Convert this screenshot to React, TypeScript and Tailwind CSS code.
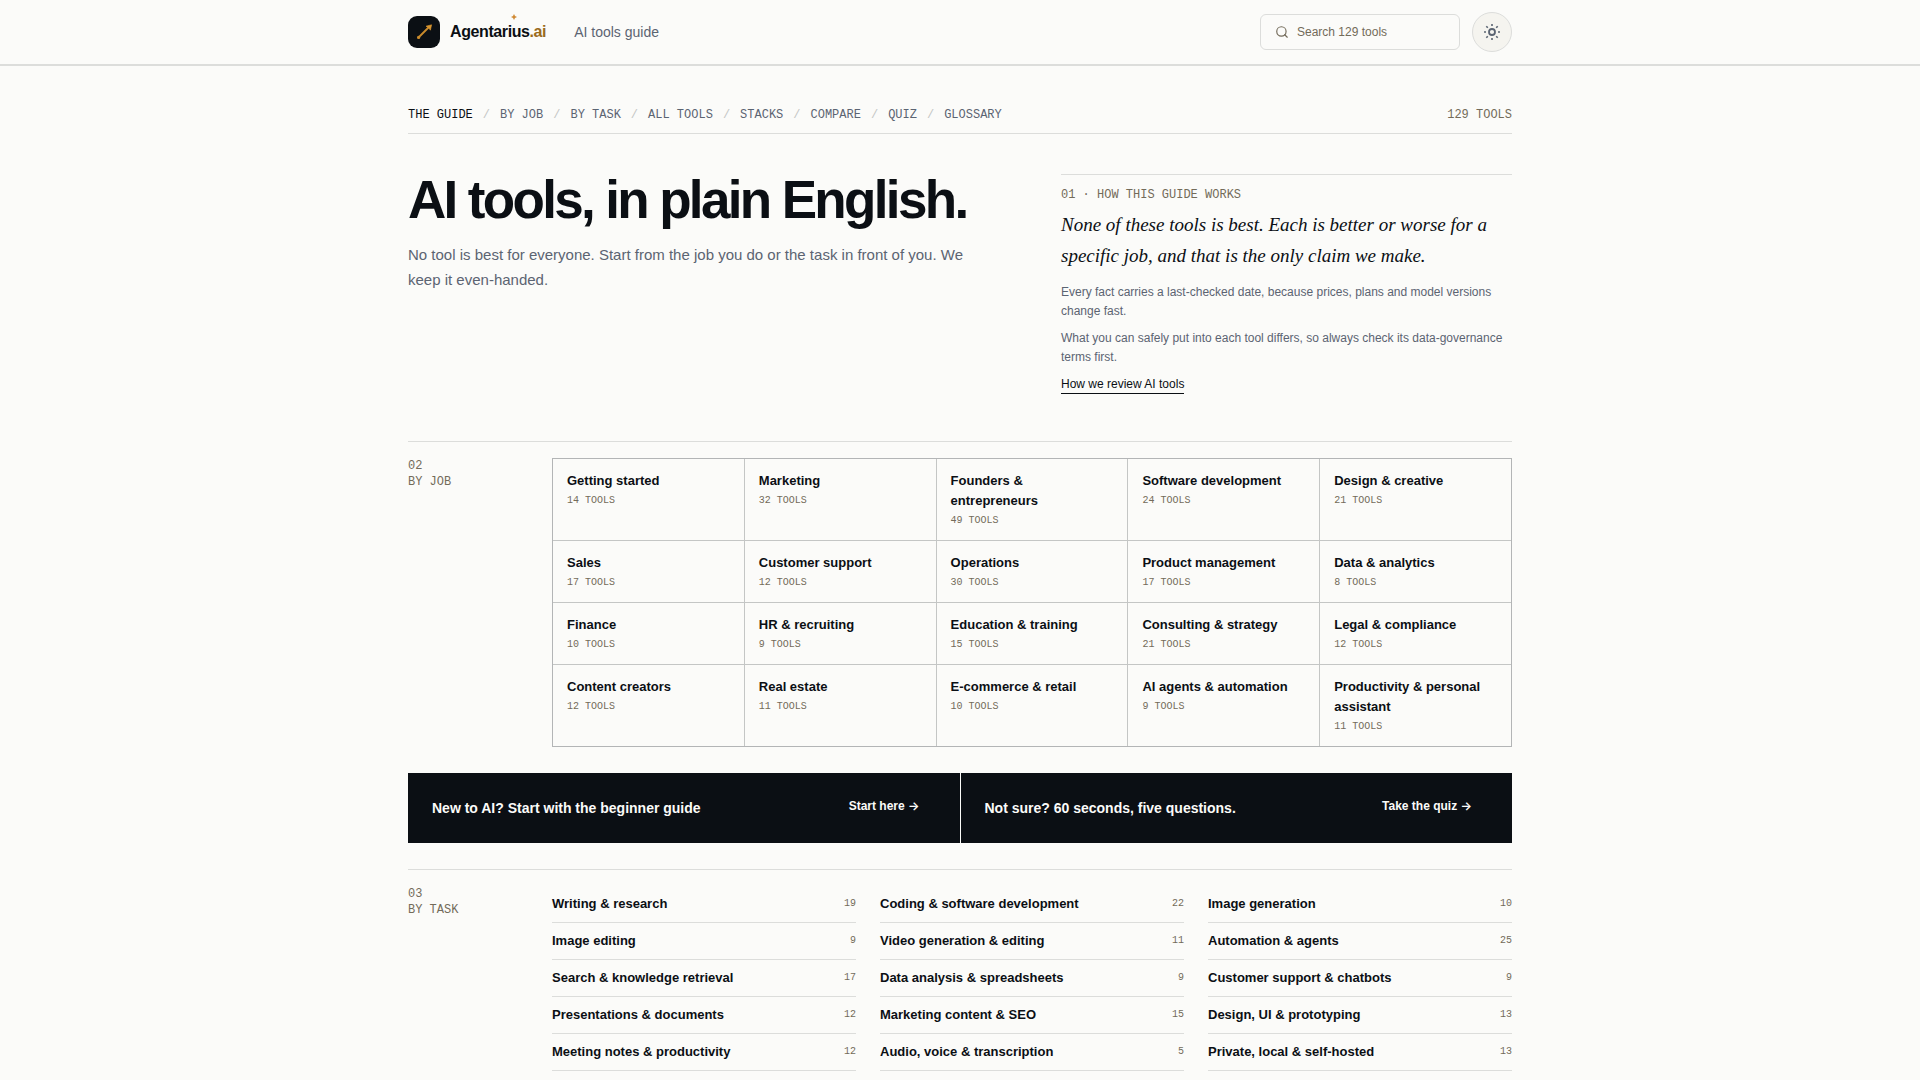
import React from "react";
import { Search } from "lucide-react";

const sections = ["The guide", "By job", "By task", "All tools", "Stacks", "Compare", "Quiz", "Glossary"];

const jobs: [string, number][] = [
  ["Getting started", 14],
  ["Marketing", 32],
  ["Founders & entrepreneurs", 49],
  ["Software development", 24],
  ["Design & creative", 21],
  ["Sales", 17],
  ["Customer support", 12],
  ["Operations", 30],
  ["Product management", 17],
  ["Data & analytics", 8],
  ["Finance", 10],
  ["HR & recruiting", 9],
  ["Education & training", 15],
  ["Consulting & strategy", 21],
  ["Legal & compliance", 12],
  ["Content creators", 12],
  ["Real estate", 11],
  ["E-commerce & retail", 10],
  ["AI agents & automation", 9],
  ["Productivity & personal assistant", 11],
];

const tasks: [string, number][] = [
  ["Writing & research", 19],
  ["Coding & software development", 22],
  ["Image generation", 10],
  ["Image editing", 9],
  ["Video generation & editing", 11],
  ["Automation & agents", 25],
  ["Search & knowledge retrieval", 17],
  ["Data analysis & spreadsheets", 9],
  ["Customer support & chatbots", 9],
  ["Presentations & documents", 12],
  ["Marketing content & SEO", 15],
  ["Design, UI & prototyping", 13],
  ["Meeting notes & productivity", 12],
  ["Audio, voice & transcription", 5],
  ["Private, local & self-hosted", 13],
];

const mono = "font-['Liberation_Mono',monospace]";

function LogoMark() {
  return (
    <svg viewBox="0 0 32 32" className="size-8" aria-hidden="true">
      <rect width="32" height="32" rx="9" fill="#0b0f14" />
      <path d="M10.5 21.5 20.5 11.5" stroke="#c98a2b" strokeWidth="1.8" strokeLinecap="round" />
      <path d="M23.6 8.8 22.4 14.2 20.6 11.8 18 10.2Z" fill="#d8952f" stroke="#d8952f" strokeWidth="0.6" strokeLinejoin="round" />
      <circle cx="10.6" cy="21.4" r="1.6" fill="#c98a2b" />
    </svg>
  );
}

function SunIcon() {
  return (
    <svg viewBox="0 0 16 16" className="size-4" fill="none" stroke="#5b6472" strokeWidth="1.6" aria-hidden="true">
      <circle cx="8" cy="8" r="3" strokeWidth="1.8" />
      <path d="M8 0v2M8 14v2M0 8h2M14 8h2M2.3 2.3l1.5 1.5M12.2 12.2l1.5 1.5M2.3 13.7l1.5-1.5M12.2 3.8l1.5-1.5" />
    </svg>
  );
}

function SectionLabel({ number, title }: { number: string; title: string }) {
  return (
    <h2 className={`${mono} text-[12px] leading-4 uppercase text-[#736b5a]`}>
      {number}
      <br />
      {title}
    </h2>
  );
}

function Promo({ text, action }: { text: string; action: string }) {
  return (
    <div className="flex items-center justify-between bg-[#0b0f14] px-6 py-[15px] text-[#fbfbf9]">
      <p className="text-[14px] leading-6 font-semibold">{text}</p>
      <a href="#" className="px-4 pt-2 pb-3 text-[12px] leading-5 font-semibold">
        {action} <span className="font-['Inter',sans-serif]">→</span>
      </a>
    </div>
  );
}

export default function App() {
  return (
    <div className="min-h-screen bg-[#fbfbf9] font-['Liberation_Sans',Arial,sans-serif] text-[#0b0f14]">
      <header className="border-b-2 border-[#dcdddb]">
        <div className="mx-auto flex h-16 max-w-6xl items-center px-6">
          <a href="#" className="flex items-center gap-2.5">
            <LogoMark />
            <span className="relative text-[16px] leading-6 font-semibold tracking-tight">
              Agentarius<span className="text-[#9a6a1c]">.ai</span>
              <svg viewBox="0 0 6 6" className="absolute -top-1.5 left-[61px] size-1.5" aria-hidden="true">
                <path d="M3 0 4 2 6 3 4 4 3 6 2 4 0 3 2 2Z" fill="#d08a35" />
              </svg>
            </span>
          </a>
          <a href="#" className="ml-7 text-[14px] leading-5 text-[#5b6472]">AI tools guide</a>
          <div className="ml-auto flex items-center gap-3">
            <label className="flex h-9 w-50 items-center gap-2 rounded-md border border-[#dcdddb] px-3.5">
              <Search className="size-3.5 text-[#736b5a]" />
              <input
                type="search"
                aria-label="Search tools"
                placeholder="Search 129 tools"
                className="min-w-0 flex-1 bg-transparent text-[12px] leading-5 outline-none placeholder:text-[#736b5a]"
              />
            </label>
            <button
              type="button"
              aria-label="Switch theme"
              className="flex size-10 items-center justify-center rounded-full border border-[#dcdddb] bg-[#f5f4ef]"
            >
              <SunIcon />
            </button>
          </div>
        </div>
      </header>

      <main className="mx-auto max-w-6xl px-6 pt-[41px]">
        <nav
          aria-label="Guide"
          className={`${mono} flex items-center justify-between border-b border-[#dcdddb] pb-2.5 text-[12px] leading-4 uppercase`}
        >
          <ol className="flex items-center gap-2.5 text-[#5b6472]">
            {sections.map((name, i) => (
              <li key={name} className="flex gap-2.5">
                {i > 0 && <span className="text-[#c4c6c5]">/</span>}
                <a href="#" className={i === 0 ? "text-[#0b0f14]" : ""}>{name}</a>
              </li>
            ))}
          </ol>
          <span className="text-[#736b5a]">129 tools</span>
        </nav>

        <section className="grid grid-cols-[1fr_451px] gap-20 pt-10 pb-[46px]">
          <div>
            <h1 className="text-[53px] leading-[52px] font-bold tracking-tighter">AI tools, in plain English.</h1>
            <p className="mt-4 text-[15px] leading-[25px] text-[#5b6472]">
              No tool is best for everyone. Start from the job you do or the task in front of you. We keep it even-handed.
            </p>
          </div>
          <aside className="border-t border-[#dcdddb] pt-3">
            <h2 className={`${mono} text-[12px] leading-4 uppercase text-[#736b5a]`}>
              01 · How this guide works
            </h2>
            <p className="mt-1.5 font-['Liberation_Serif',serif] text-[19px] leading-[31px] italic">
              None of these tools is best. Each is better or worse for a specific job, and that is the only claim we make.
            </p>
            <p className="mt-3 text-[12px] leading-[19px] text-[#5b6472]">
              Every fact carries a last-checked date, because prices, plans and model versions change fast.
            </p>
            <p className="mt-2 text-[12px] leading-[19px] text-[#5b6472]">
              What you can safely put into each tool differs, so always check its data-governance terms first.
            </p>
            <a href="#" className="mt-2 inline-block border-b border-[#0b0f14] text-[12px] leading-[18px]">
              How we review AI tools
            </a>
          </aside>
        </section>

        <section className="grid grid-cols-[120px_1fr] gap-6 border-t border-[#dcdddb] pt-4">
          <SectionLabel number="02" title="By job" />
          <ul className="grid grid-cols-5 gap-px border border-[#b3b5b6] bg-[#c4c6c5]">
            {jobs.map(([name, count]) => (
              <li key={name} className="bg-[#fbfbf9]">
                <a href="#" className="block px-3.5 py-3">
                  <span className="block text-[13px] leading-5 font-semibold">{name}</span>
                  <span className={`${mono} mt-[3px] block text-[10px] leading-[14px] uppercase text-[#736b5a]`}>
                    {count} tools
                  </span>
                </a>
              </li>
            ))}
          </ul>
        </section>

        <section className="mt-[26px] grid grid-cols-2 gap-px">
          <Promo text="New to AI? Start with the beginner guide" action="Start here" />
          <Promo text="Not sure? 60 seconds, five questions." action="Take the quiz" />
        </section>

        <section className="mt-[26px] grid grid-cols-[120px_1fr] gap-6 border-t border-[#dcdddb] pt-4">
          <SectionLabel number="03" title="By task" />
          <ul className="grid grid-cols-3 gap-x-6">
            {tasks.map(([name, count]) => (
              <li key={name} className="border-b border-[#dcdddb]">
                <a href="#" className="flex items-center justify-between py-2">
                  <span className="text-[13px] leading-5 font-semibold">{name}</span>
                  <span className={`${mono} text-[10px] leading-5 text-[#736b5a]`}>{count}</span>
                </a>
              </li>
            ))}
          </ul>
        </section>
      </main>
    </div>
  );
}
